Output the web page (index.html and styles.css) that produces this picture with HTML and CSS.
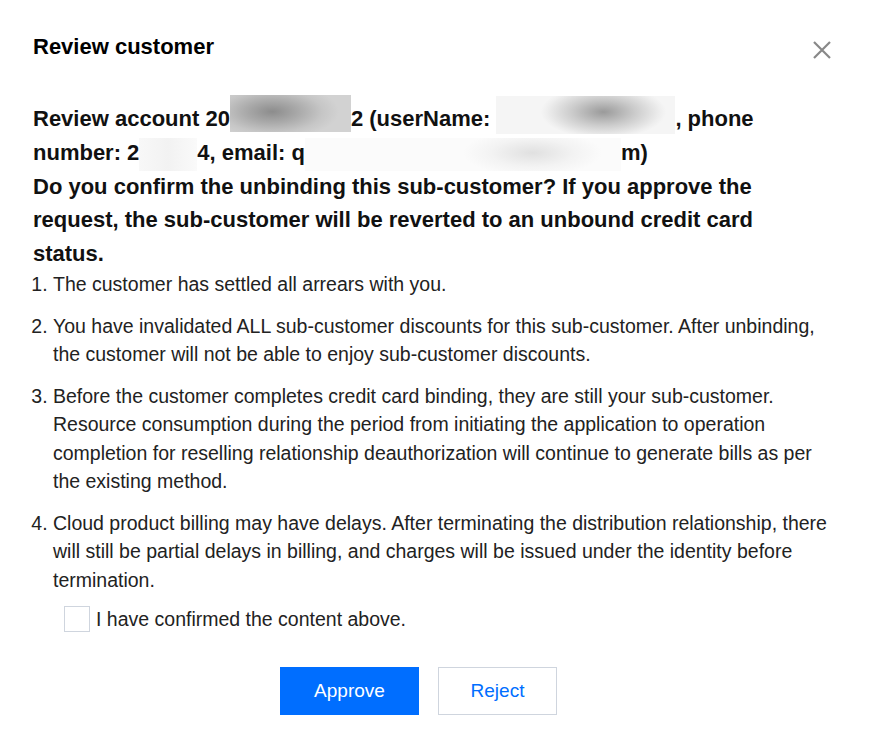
FILE: index.html
```html
<!DOCTYPE html>
<html lang="en">
<head>
<meta charset="utf-8">
<title>Review customer</title>
<link rel="stylesheet" href="styles.css">
</head>
<body>
<div class="dialog">
  <div class="header">
    <h1 class="title">Review customer</h1>
    <button class="close" aria-label="Close">
      <svg width="20" height="20" viewBox="0 0 20 20"><path d="M2 2 L18 18 M18 2 L2 18" stroke="#888" stroke-width="2.2" fill="none"/></svg>
    </button>
  </div>
  <div class="body">
    <p class="lead"><span>Review account 20</span><span class="blur blur-a"></span><span>2 (userName: </span><span class="blur blur-b"></span><span>, phone</span><br><span>number: 2</span><span class="blur blur-c"></span><span>4, email: q</span><span class="blur blur-d"></span><span>m)</span></p>
    <p class="lead">Do you confirm the unbinding this sub-customer? If you approve the request, the sub-customer will be reverted to an unbound credit card status.</p>
    <ol class="terms">
      <li>The customer has settled all arrears with you.</li>
      <li>You have invalidated ALL sub-customer discounts for this sub-customer. After unbinding, the customer will not be able to enjoy sub-customer discounts.</li>
      <li>Before the customer completes credit card binding, they are still your sub-customer. Resource consumption during the period from initiating the application to operation completion for reselling relationship deauthorization will continue to generate bills as per the existing method.</li>
      <li>Cloud product billing may have delays. After terminating the distribution relationship, there will still be partial delays in billing, and charges will be issued under the identity before termination.</li>
    </ol>
    <label class="confirm"><span class="box"></span><span>I have confirmed the content above.</span></label>
  </div>
  <div class="footer">
    <button class="btn btn-primary">Approve</button>
    <button class="btn btn-default">Reject</button>
  </div>
</div>
</body>
</html>
```
FILE: styles.css
```css
html, body {
  margin: 0;
  padding: 0;
  background: #fff;
}
body {
  font-family: "Liberation Sans", Arial, Helvetica, sans-serif;
  color: #000;
}
.dialog {
  width: 870px;
  height: 748px;
  box-sizing: border-box;
  padding: 30px 35px 0 33px;
}
.header {
  display: flex;
  justify-content: space-between;
  align-items: center;
  height: 34px;
}
.title {
  margin: 0;
  font-size: 22px;
  line-height: 34px;
  font-weight: bold;
  color: #000;
}
.close {
  border: 0;
  background: none;
  padding: 0;
  width: 20px;
  height: 20px;
  margin: 5px 3px 0 0;
  display: flex;
}
.body {
  margin-top: 38px;
}
.lead {
  margin: 0 30px 0 0;
  font-size: 22px;
  font-weight: bold;
  line-height: 33.5px;
  color: #111;
}
.blur {
  display: inline-block;
  vertical-align: top;
}
.blur-a {
  width: 121px;
  height: 37px;
  margin: -7px 0 0 0;
  background: radial-gradient(ellipse 55% 75% at 35% 45%, #8c8c8c 0%, #aaaaaa 40%, #c6c6c6 75%, #d2d2d2 100%);
}
.blur-b {
  width: 179px;
  height: 38px;
  margin: -6px 0 0 0;
  background: radial-gradient(ellipse 35% 70% at 60% 42%, #9a9a9a 0%, #cbcbcb 50%, #eeeeee 90%, #f5f5f5 100%);
}
.blur-c {
  width: 58px;
  height: 33px;
  margin: 2px 0 -1px 0;
  background: linear-gradient(90deg, #f8f8f8, #f2f2f2 50%, #fafafa);
}
.blur-d {
  width: 316px;
  height: 33px;
  margin: 2px 0 -1px 0;
  background: radial-gradient(ellipse 22% 70% at 72% 45%, #e0e0e0 0%, #f3f3f3 60%, #fbfbfb 100%);
}
.terms {
  margin: 0;
  padding: 0 0 0 20px;
  font-size: 19.5px;
  line-height: 28.5px;
  color: #222;
}
.terms li {
  margin: 0 0 13px 0;
  padding-left: 0;
}
.terms li:last-child {
  margin-bottom: 0;
}
.confirm {
  display: flex;
  align-items: center;
  gap: 6px;
  margin: 11px 0 0 31px;
  font-size: 19.5px;
  line-height: 28px;
  color: #222;
}
.box {
  width: 26px;
  height: 26px;
  border: 1px solid #cfd5de;
  box-sizing: border-box;
  display: inline-block;
}
.footer {
  display: flex;
  justify-content: center;
  gap: 19px;
  margin-top: 34px;
  padding-right: 31px;
}
.btn {
  height: 48px;
  font-family: "Liberation Sans", Arial, Helvetica, sans-serif;
  font-size: 19px;
  box-sizing: border-box;
  cursor: pointer;
  padding: 0;
}
.btn-primary {
  width: 139px;
  background: #006eff;
  color: #fff;
  border: 0;
}
.btn-default {
  width: 119px;
  background: #fff;
  color: #006eff;
  border: 1px solid #cfd5de;
}
```
